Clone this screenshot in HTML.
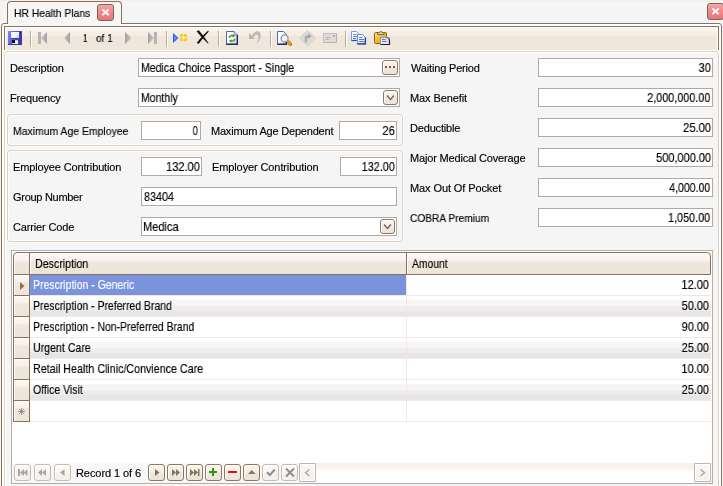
<!DOCTYPE html>
<html><head><meta charset="utf-8"><title>HR Health Plans</title>
<style>
*{box-sizing:border-box;margin:0;padding:0}
html,body{width:723px;height:486px;overflow:hidden;background:#f5f5f5}
body{position:relative;font-family:"Liberation Sans",sans-serif;font-size:11px;color:#000}
.a{position:absolute}
.t{position:absolute;white-space:nowrap;line-height:13px;height:13px;font-size:11px;will-change:transform;-webkit-text-stroke:0.15px currentColor}
.t.m{font-size:12.4px;line-height:14px;height:14px}
.in{position:absolute;background:#fff;border:1px solid #b5a8a2;height:19px}
.in .t{top:3px}
.gb{position:absolute;border:1px solid #e0cfbc;border-radius:3px;background:#f5f5f5;box-shadow:inset 0 0 0 1px #fdfdfd,0 0 0 1px #fafafa}
.btn{position:absolute;border:1px solid #8f7765;border-radius:3px;background:linear-gradient(#f8f3ec 0,#f5efe7 6px,#efe7dc 7px,#ede4d8 100%);box-shadow:inset 1px 1px 0 #fff}
.nb{position:absolute;width:17px;height:17px;top:464px;border:1px solid #8f7765;border-radius:3px;background:linear-gradient(#f8f3ec 0,#f5efe7 7px,#efe7dc 8px,#ede4d8 100%);box-shadow:inset 1px 1px 0 #fff}
.nb.d{border-color:#c7bbb0;background:linear-gradient(#fbfaf8 0,#f9f7f4 7px,#f5f2ee 8px,#f4f0eb 100%)}
.nb svg{position:absolute;left:0;top:0}
.sep{position:absolute;top:31px;width:2px;height:16px;border-left:1px solid #b8ab9d;border-right:1px solid #fff}
</style></head>
<body>
<div class="a" style="left:0;top:0;width:723px;height:1px;background:#f7efe6"></div>
<div class="a" style="left:0;top:0;width:1px;height:486px;background:#faf3ea"></div>
<div class="a" style="left:7px;top:1px;width:115px;height:24px;border:1px solid #8a705e;border-bottom:none;border-radius:4px 4px 0 0;background:#f6f6f6"></div>
<div class="a" style="left:1px;top:23px;width:721px;height:480px;border:1px solid #8a705e;border-radius:3px;background:#fff"></div>
<div class="a" style="left:8px;top:23px;width:113px;height:3px;background:#f6f6f6"></div>
<div class="t t" style="left:14.40px;transform-origin:0 0;top:7px;transform:scaleX(0.9378)">HR Health Plans</div>
<div class="a" style="left:97px;top:4px;width:17px;height:17px;border:1px solid #7d6555;border-radius:3px;background:linear-gradient(#f6a6a6,#f08a8c 45%,#ec7478)"><svg class="a" style="left:0;top:0" width="15" height="15" viewBox="0 0 15 15"><path d="M4.300 4.500l6.400 5.600m0-5.600l-6.400 5.600" stroke="#fff" stroke-width="1.900" fill="none"/></svg></div>
<div class="a" style="left:707px;top:3px;width:17px;height:17px;border:1px solid #7d6555;border-radius:3px;background:linear-gradient(#f6a6a6,#f08a8c 45%,#ec7478)"><svg class="a" style="left:0;top:0" width="15" height="15" viewBox="0 0 15 15"><path d="M4.300 4.500l6.400 5.600m0-5.600l-6.400 5.600" stroke="#fff" stroke-width="1.900" fill="none"/></svg></div>
<div class="a" style="left:4px;top:26px;width:715px;height:24px;border:1px solid #8a705e;border-bottom:none;background:#fff"></div>
<div class="a" style="left:6px;top:28px;width:711px;height:22px;background:linear-gradient(#f8f5f1 0,#f8f5f1 3px,#f6ede4 3px,#f6ede4 8px,#efe7db 8px)"></div>
<div class="a" style="left:4px;top:51px;width:715px;height:445px;border:1px solid #dccebd;border-radius:3px;background:#f5f5f5;box-shadow:inset 1px 1px 0 #fff"></div>
<svg class="a" style="left:8px;top:31px" width="14" height="14" viewBox="0 0 14 14"><defs><linearGradient id="fl" x1="0" x2="1" y1="0" y2="0.300"><stop offset="0" stop-color="#8688f0"/><stop offset="0.500" stop-color="#5a5cd0"/><stop offset="1" stop-color="#3a3aa8"/></linearGradient></defs><path d="M0 0h14v14h-13l-1-1z" fill="url(#fl)"/><rect x="0" y="13" width="14" height="1" fill="#3a3aa0"/><rect x="3" y="1" width="8" height="6" fill="#f2f4fc"/><path d="M11 3v4h-4z" fill="#d4d8f4"/><rect x="3" y="7" width="8" height="1" fill="#3c3cb0"/><rect x="4" y="9" width="6" height="4" fill="#c8cce8"/><rect x="4" y="9" width="3" height="3" fill="#0c0c18"/><rect x="7" y="10" width="3" height="3" fill="#eef0fa"/><rect x="12" y="1" width="1" height="2" fill="#28287c"/></svg>
<div class="sep" style="left:30px"></div>
<div class="sep" style="left:166px"></div>
<div class="sep" style="left:218px"></div>
<div class="sep" style="left:270px"></div>
<div class="sep" style="left:345px"></div>
<svg width="0" height="0" class="a"><defs><linearGradient id="gg" x1="0" x2="1" y1="0" y2="0"><stop offset="0" stop-color="#c8c8c8"/><stop offset="1" stop-color="#a0a0a0"/></linearGradient><linearGradient id="gg2" x1="1" x2="0" y1="0" y2="0"><stop offset="0" stop-color="#c8c8c8"/><stop offset="1" stop-color="#a0a0a0"/></linearGradient><linearGradient id="doc" x1="0" x2="1" y1="0" y2="1"><stop offset="0.400" stop-color="#fff"/><stop offset="1" stop-color="#b8c8ec"/></linearGradient><linearGradient id="clip" x1="0" x2="1" y1="0" y2="1"><stop offset="0" stop-color="#fbe07a"/><stop offset="0.500" stop-color="#f0b820"/><stop offset="1" stop-color="#d89408"/></linearGradient></defs></svg>
<svg class="a" style="left:38px;top:32px" width="10" height="12"><rect x="0" y="0" width="3" height="12" fill="#b4b4b4"/><path d="M9 0v12l-6-6z" fill="url(#gg)"/></svg>
<svg class="a" style="left:64px;top:32px" width="7" height="12"><path d="M6 0v12l-6-6z" fill="url(#gg)"/></svg>
<div class="t t" style="left:82.90px;transform-origin:0 0;top:32px;transform:scaleX(0.7233)">1</div>
<div class="t t" style="left:96.10px;transform-origin:0 0;top:32px;transform:scaleX(0.9129)">of 1</div>
<svg class="a" style="left:125px;top:32px" width="7" height="12"><path d="M0 0v12l6.500-6z" fill="url(#gg2)"/></svg>
<svg class="a" style="left:148px;top:32px" width="10" height="12"><rect x="6" y="0" width="3" height="12" fill="#b4b4b4"/><path d="M0 0v12l6-6z" fill="url(#gg2)"/></svg>
<svg class="a" style="left:173px;top:33px" width="15" height="10"><path d="M0 0v10l5.500-5z" fill="#2463ee"/><path d="M1 2.500v5l3-2.500z" fill="#5a90ff"/><rect x="7" y="1" width="7" height="7" fill="#f5cd2a"/><path d="M10.500 1v7M7 4.500h7" stroke="#fae67a" stroke-width="1"/><path d="M7.500 1.500l6 6M13.500 1.500l-6 6" stroke="#f8dc58" stroke-width=".800"/><rect x="9.500" y="3.500" width="2" height="2" fill="#fef6c0"/><rect x="10" y="4" width="1" height="1" fill="#fff"/></svg>
<svg class="a" style="left:196px;top:30px" width="14" height="14"><path d="M0.600 1.200L2.800.300C6 4.200 9.500 8.800 12.600 13.200L11.900 13.600C8 9.500 4 5.500.600 1.200z" fill="#111"/><path d="M12 .800L12.900 1.500C9.500 5 6 9.500 2.800 13.800L.600 13C4 8.500 8 4.500 12 .800z" fill="#111"/></svg>
<svg class="a" style="left:226px;top:31px" width="12" height="14"><path d="M0.500.500h7.500l3.500 3.500v9.500h-11z" fill="url(#doc)" stroke="#4868b0"/><path d="M8 .500v3.500h3.500" fill="#dfe6f8" stroke="#4868b0" stroke-width=".800"/><path d="M11.300 4v9.300h-10.800" fill="none" stroke="#1c2c60" stroke-width="1.400"/><path d="M3.200 6.800a2.800 2.500 0 0 1 4.600-1.600M8.800 7.800a2.800 2.500 0 0 1-4.600 1.700" stroke="#4a9c1c" stroke-width="1.500" fill="none"/><path d="M6.600 3.200l2.600 2-3 1zM5.400 11.500l-2.600-2 3-1z" fill="#4a9c1c"/></svg>
<svg class="a" style="left:249px;top:31px" width="13" height="13"><path d="M0 2L0 8L6 8Z" fill="#b4b2ae"/><path d="M3 4.500C4.500 1.500 7 0 9 .300C11.500.800 12 4 11.500 6.500C11 9 9.500 11.500 7.500 12.700C9 10 9.600 7.500 9.300 5.500C9 3.800 7.500 3.300 6.500 4C5.800 4.500 5.200 5.500 4.800 6.500Z" fill="#bdbbb7"/></svg>
<svg class="a" style="left:277px;top:31px" width="16" height="15"><path d="M0.500.500h6l3 3v10h-9z" fill="url(#doc)" stroke="#4868b0"/><path d="M9.300 4v9.300h-8.800" fill="none" stroke="#1c2c60" stroke-width="1.400"/><circle cx="7.600" cy="7.400" r="3.500" fill="#e8f2ff" stroke="#8c94a4" stroke-width="1.300"/><circle cx="6.800" cy="6.600" r="1.300" fill="#fff"/><path d="M11.300 11l2 2.200" stroke="#b06a10" stroke-width="3.400" stroke-linecap="round"/><path d="M11.100 10.700l2 2.200" stroke="#f09a1c" stroke-width="2.400" stroke-linecap="round"/></svg>
<svg class="a" style="left:299px;top:30px" width="17" height="16"><path d="M8.500.400l7.800 7.600-7.800 7.600-7.800-7.600z" fill="#dddbd7" stroke="#cfccc7"/><path d="M5.800 12.500v-4.500q0-2.800 3.200-2.800v-1.900l3.600 3-3.600 3v-1.900q-1.200 0-1.200 1.200v3.900z" fill="#aaa8a4"/></svg>
<svg class="a" style="left:323px;top:33px" width="14" height="10"><rect x="0.500" y="0.500" width="13" height="9" fill="#dedcd9" stroke="#c3c1bd"/><path d="M.500 9.500h13v-9" fill="none" stroke="#b5b3af"/><rect x="10" y="2" width="2" height="2" fill="#aaa8a4"/><path d="M2.500 4.500h5M2.500 6.500h4" stroke="#b8b6b2"/></svg>
<svg class="a" style="left:351px;top:31px" width="16" height="14"><path d="M0.500.500h5l2.500 2.500v6.500h-7.500z" fill="url(#doc)" stroke="#7c98dc"/><path d="M.500 9.500h5" stroke="#2c4cac" stroke-width="1.200"/><path d="M2 3.500h3.500M2 5.500h4M2 7.500h3" stroke="#5a88e8"/><path d="M6.500 3.500h5l3 3v6.500h-8z" fill="url(#doc)" stroke="#6c8cd8"/><path d="M14.400 6.500v6.400h-8" fill="none" stroke="#1c3c9c" stroke-width="1.300"/><path d="M8 6.500h3.500M8 8.500h5M8 10.500h5" stroke="#4a78e0"/></svg>
<svg class="a" style="left:374px;top:31px" width="17" height="14"><rect x="0.500" y="1.500" width="12" height="11" rx="1" fill="url(#clip)" stroke="#8a6810"/><path d="M3.500 3.500v-2h2l.500-1h1.500l.500 1h2v2z" fill="#d8d0b8" stroke="#6a5a30" stroke-width=".800"/><rect x="6.500" y="6.500" width="9" height="7" fill="#dde4f0" stroke="#8a9cc0"/><path d="M15.500 8.500v5h-9" fill="none" stroke="#1c2030" stroke-width="1.200"/><path d="M8 8.500h3.500M8 10.500h4.500" stroke="#6a7ca8"/><path d="M13 6.500l2.500 2.500" stroke="#384058"/></svg>
<div class="gb" style="left:7px;top:114px;width:396px;height:32px"></div>
<div class="gb" style="left:7px;top:150px;width:396px;height:92px"></div>
<div class="t" style="left:10.40px;top:62px;letter-spacing:-0.117px">Description</div>
<div class="in" style="left:138px;top:58px;width:262px"></div>
<div class="t m" style="left:141.05px;transform-origin:0 0;top:61px;transform:scaleX(0.8521)">Medica Choice Passport - Single</div>
<div class="btn" style="left:382px;top:60px;width:16px;height:15px"><svg class="a" style="left:0;top:0" width="14" height="13"><rect x="2" y="5" width="2" height="2" fill="#7a5e4c"/><rect x="6" y="5" width="2" height="2" fill="#7a5e4c"/><rect x="10" y="5" width="2" height="2" fill="#7a5e4c"/></svg></div>
<div class="t" style="left:10.40px;top:92px;letter-spacing:-0.156px">Frequency</div>
<div class="in" style="left:138px;top:88px;width:262px"></div>
<div class="t m" style="left:141.05px;transform-origin:0 0;top:91px;transform:scaleX(0.8474)">Monthly</div>
<div class="btn" style="left:383px;top:90px;width:15px;height:15px"><svg class="a" style="left:0;top:0" width="13" height="13"><path d="M3 4.500l3.500 4 3.500-4" stroke="#7a6252" stroke-width="1.300" fill="none"/></svg></div>
<div class="t t" style="left:12.90px;transform-origin:0 0;top:125px;transform:scaleX(0.9483)">Maximum Age Employee</div>
<div class="in" style="left:141px;top:121px;width:60px"></div>
<div class="t m" style="right:524.98px;transform-origin:100% 0;top:124px;transform:scaleX(0.7571)">0</div>
<div class="t" style="left:210.90px;top:125px;letter-spacing:-0.205px">Maximum Age Dependent</div>
<div class="in" style="left:339px;top:121px;width:58px"></div>
<div class="t m" style="right:328.20px;transform-origin:100% 0;top:124px;transform:scaleX(0.9019)">26</div>
<div class="t" style="left:12.90px;top:161px;letter-spacing:-0.143px">Employee Contribution</div>
<div class="in" style="left:141px;top:157px;width:61px"></div>
<div class="t m" style="right:523.20px;transform-origin:100% 0;top:160px;transform:scaleX(0.8943)">132.00</div>
<div class="t" style="left:211.80px;top:161px;letter-spacing:-0.110px">Employer Contribution</div>
<div class="in" style="left:340px;top:157px;width:57px"></div>
<div class="t m" style="right:328.20px;transform-origin:100% 0;top:160px;transform:scaleX(0.8772)">132.00</div>
<div class="t" style="left:12.90px;top:191px;letter-spacing:-0.286px">Group Number</div>
<div class="in" style="left:141px;top:187px;width:256px"></div>
<div class="t m" style="left:144.30px;transform-origin:0 0;top:190px;transform:scaleX(0.8679)">83404</div>
<div class="t" style="left:12.90px;top:221px;letter-spacing:-0.148px">Carrier Code</div>
<div class="in" style="left:141px;top:217px;width:256px"></div>
<div class="t m" style="left:143.41px;transform-origin:0 0;top:220px;transform:scaleX(0.8937)">Medica</div>
<div class="btn" style="left:380px;top:219px;width:15px;height:15px"><svg class="a" style="left:0;top:0" width="13" height="13"><path d="M3 4.500l3.500 4 3.500-4" stroke="#7a6252" stroke-width="1.300" fill="none"/></svg></div>
<div class="t" style="left:410.80px;top:62px;letter-spacing:-0.170px">Waiting Period</div>
<div class="in" style="left:538px;top:58px;width:175px"></div>
<div class="t m" style="right:12.40px;transform-origin:100% 0;top:61px;transform:scaleX(0.8863)">30</div>
<div class="t" style="left:410.10px;top:92px;letter-spacing:-0.101px">Max Benefit</div>
<div class="in" style="left:538px;top:88px;width:175px"></div>
<div class="t m" style="right:13.10px;transform-origin:100% 0;top:91px;transform:scaleX(0.8725)">2,000,000.00</div>
<div class="t" style="left:410.10px;top:122px;letter-spacing:-0.182px">Deductible</div>
<div class="in" style="left:538px;top:118px;width:175px"></div>
<div class="t m" style="right:12.40px;transform-origin:100% 0;top:121px;transform:scaleX(0.9002)">25.00</div>
<div class="t" style="left:410.10px;top:152px;letter-spacing:-0.176px">Major Medical Coverage</div>
<div class="in" style="left:538px;top:148px;width:175px"></div>
<div class="t m" style="right:12.40px;transform-origin:100% 0;top:151px;transform:scaleX(0.8849)">500,000.00</div>
<div class="t" style="left:410.10px;top:182px;letter-spacing:-0.103px">Max Out Of Pocket</div>
<div class="in" style="left:538px;top:178px;width:175px"></div>
<div class="t m" style="right:13.09px;transform-origin:100% 0;top:181px;transform:scaleX(0.8502)">4,000.00</div>
<div class="t t" style="left:410.10px;transform-origin:0 0;top:212px;transform:scaleX(0.9247)">COBRA Premium</div>
<div class="in" style="left:538px;top:208px;width:175px"></div>
<div class="t m" style="right:13.10px;transform-origin:100% 0;top:211px;transform:scaleX(0.8760)">1,050.00</div>
<div class="a" style="left:11px;top:250px;width:702px;height:234px;border:1px solid #b9ada3;background:#fff"></div>
<div class="a" style="left:13px;top:252px;width:698px;height:23px;border:1px solid #8a705e;border-radius:4px 4px 0 0;background:linear-gradient(#fbf8f4 0,#f6f0e9 8px,#efe7dc 9px,#ede4d8 100%);box-shadow:inset 1px 1px 0 #fff"></div>
<div class="a" style="left:29px;top:253px;width:1px;height:21px;background:#8a705e"></div><div class="a" style="left:30px;top:253px;width:1px;height:21px;background:#fff"></div>
<div class="a" style="left:406px;top:253px;width:1px;height:21px;background:#8a705e"></div><div class="a" style="left:407px;top:253px;width:1px;height:21px;background:#fff"></div>
<div class="t m" style="left:34.94px;transform-origin:0 0;top:257px;transform:scaleX(0.8594)">Description</div>
<div class="t m" style="left:411.90px;transform-origin:0 0;top:257px;transform:scaleX(0.8345)">Amount</div>
<div class="a" style="left:13px;top:274px;width:17px;height:22px;border:1px solid #8a705e;background:linear-gradient(#fbf8f3 0,#f6f0e8 7px,#efe7dc 8px,#eee5d9 100%);box-shadow:inset 1px 1px 0 #fff"></div>
<div class="a" style="left:30px;top:275px;width:681px;height:20px;background:#fff"></div>
<div class="a" style="left:30px;top:275px;width:376px;height:20px;background:#7a93dc"></div>
<div class="a" style="left:30px;top:295px;width:681px;height:1px;background:#f1e9df"></div>
<div class="a" style="left:406px;top:275px;width:1px;height:21px;background:#f1e9df"></div>
<div class="t m" style="left:33.05px;transform-origin:0 0;top:278px;transform:scaleX(0.8455);color:#fff">Prescription - Generic</div>
<div class="t m" style="right:14.20px;transform-origin:100% 0;top:278px;transform:scaleX(0.8913)">12.00</div>
<div class="a" style="left:13px;top:295px;width:17px;height:22px;border:1px solid #8a705e;background:linear-gradient(#fbf8f3 0,#f6f0e8 7px,#efe7dc 8px,#eee5d9 100%);box-shadow:inset 1px 1px 0 #fff"></div>
<div class="a" style="left:30px;top:296px;width:681px;height:20px;background:linear-gradient(#fff 0,#fff 4px,#f6f6f6 4px,#f6f6f6 10px,#eeecec 10px,#eeecec 15px,#e7e5e5 15px)"></div>
<div class="a" style="left:30px;top:316px;width:681px;height:1px;background:#f1e9df"></div>
<div class="a" style="left:406px;top:296px;width:1px;height:21px;background:#f1e9df"></div>
<div class="t m" style="left:33.06px;transform-origin:0 0;top:299px;transform:scaleX(0.8437)">Prescription - Preferred Brand</div>
<div class="t m" style="right:14.20px;transform-origin:100% 0;top:299px;transform:scaleX(0.8822)">50.00</div>
<div class="a" style="left:13px;top:316px;width:17px;height:22px;border:1px solid #8a705e;background:linear-gradient(#fbf8f3 0,#f6f0e8 7px,#efe7dc 8px,#eee5d9 100%);box-shadow:inset 1px 1px 0 #fff"></div>
<div class="a" style="left:30px;top:317px;width:681px;height:20px;background:#fff"></div>
<div class="a" style="left:30px;top:337px;width:681px;height:1px;background:#f1e9df"></div>
<div class="a" style="left:406px;top:317px;width:1px;height:21px;background:#f1e9df"></div>
<div class="t m" style="left:33.06px;transform-origin:0 0;top:320px;transform:scaleX(0.8423)">Prescription - Non-Preferred Brand</div>
<div class="t m" style="right:14.20px;transform-origin:100% 0;top:320px;transform:scaleX(0.8822)">90.00</div>
<div class="a" style="left:13px;top:337px;width:17px;height:22px;border:1px solid #8a705e;background:linear-gradient(#fbf8f3 0,#f6f0e8 7px,#efe7dc 8px,#eee5d9 100%);box-shadow:inset 1px 1px 0 #fff"></div>
<div class="a" style="left:30px;top:338px;width:681px;height:20px;background:linear-gradient(#fff 0,#fff 4px,#f6f6f6 4px,#f6f6f6 10px,#eeecec 10px,#eeecec 15px,#e7e5e5 15px)"></div>
<div class="a" style="left:30px;top:358px;width:681px;height:1px;background:#f1e9df"></div>
<div class="a" style="left:406px;top:338px;width:1px;height:21px;background:#f1e9df"></div>
<div class="t m" style="left:33.20px;transform-origin:0 0;top:341px;transform:scaleX(0.8557)">Urgent Care</div>
<div class="t m" style="right:14.20px;transform-origin:100% 0;top:341px;transform:scaleX(0.8822)">25.00</div>
<div class="a" style="left:13px;top:358px;width:17px;height:22px;border:1px solid #8a705e;background:linear-gradient(#fbf8f3 0,#f6f0e8 7px,#efe7dc 8px,#eee5d9 100%);box-shadow:inset 1px 1px 0 #fff"></div>
<div class="a" style="left:30px;top:359px;width:681px;height:20px;background:#fff"></div>
<div class="a" style="left:30px;top:379px;width:681px;height:1px;background:#f1e9df"></div>
<div class="a" style="left:406px;top:359px;width:1px;height:21px;background:#f1e9df"></div>
<div class="t m" style="left:33.04px;transform-origin:0 0;top:362px;transform:scaleX(0.8640)">Retail Health Clinic/Convience Care</div>
<div class="t m" style="right:14.20px;transform-origin:100% 0;top:362px;transform:scaleX(0.8913)">10.00</div>
<div class="a" style="left:13px;top:379px;width:17px;height:22px;border:1px solid #8a705e;background:linear-gradient(#fbf8f3 0,#f6f0e8 7px,#efe7dc 8px,#eee5d9 100%);box-shadow:inset 1px 1px 0 #fff"></div>
<div class="a" style="left:30px;top:380px;width:681px;height:20px;background:linear-gradient(#fff 0,#fff 4px,#f6f6f6 4px,#f6f6f6 10px,#eeecec 10px,#eeecec 15px,#e7e5e5 15px)"></div>
<div class="a" style="left:30px;top:400px;width:681px;height:1px;background:#f1e9df"></div>
<div class="a" style="left:406px;top:380px;width:1px;height:21px;background:#f1e9df"></div>
<div class="t m" style="left:33.20px;transform-origin:0 0;top:383px;transform:scaleX(0.8483)">Office Visit</div>
<div class="t m" style="right:14.20px;transform-origin:100% 0;top:383px;transform:scaleX(0.8822)">25.00</div>
<div class="a" style="left:13px;top:400px;width:17px;height:22px;border:1px solid #8a705e;background:linear-gradient(#fbf8f3 0,#f6f0e8 7px,#efe7dc 8px,#eee5d9 100%);box-shadow:inset 1px 1px 0 #fff"></div>
<div class="a" style="left:30px;top:401px;width:681px;height:20px;background:#fff"></div>
<div class="a" style="left:30px;top:421px;width:681px;height:1px;background:#f1e9df"></div>
<div class="a" style="left:406px;top:401px;width:1px;height:21px;background:#f1e9df"></div>
<svg class="a" style="left:20px;top:282px" width="5" height="8"><path d="M0 0v8l4.500-4z" fill="#8a705e"/></svg>
<svg class="a" style="left:18px;top:408px" width="7" height="7"><path d="M3.500 0v7M0 3.500h7M1 1l5 5M6 1l-5 5" stroke="#8a705e" stroke-width=".700" fill="none"/></svg>
<div class="a" style="left:12px;top:463px;width:700px;height:20px;background:#f8f8f8"></div>
<div class="nb d" style="left:14px"><svg width="15" height="15" viewBox="0 0 15 15"><rect x="3" y="4" width="2" height="7" fill="#a9a7a5"/><path d="M9 4v7l-4-3.500zM12.500 4v7l-4-3.500z" fill="#a9a7a5"/></svg></div>
<div class="nb d" style="left:34px"><svg width="15" height="15" viewBox="0 0 15 15"><path d="M7 4v7l-4-3.500zM11 4v7l-4-3.500z" fill="#a9a7a5"/></svg></div>
<div class="nb d" style="left:54px"><svg width="15" height="15" viewBox="0 0 15 15"><path d="M9.500 4v7l-4.500-3.500z" fill="#a9a7a5"/></svg></div>
<div class="t" style="left:76.10px;top:467px;letter-spacing:-0.075px">Record 1 of 6</div>
<div class="nb" style="left:148px"><svg width="15" height="15" viewBox="0 0 15 15"><path d="M6 4v7l4.500-3.500z" fill="#8a705e"/></svg></div>
<div class="nb" style="left:167px"><svg width="15" height="15" viewBox="0 0 15 15"><path d="M4 4v7l4-3.500zM8 4v7l4-3.500z" fill="#8a705e"/></svg></div>
<div class="nb" style="left:186px"><svg width="15" height="15" viewBox="0 0 15 15"><path d="M3 4v7l4-3.500zM7 4v7l4-3.500z" fill="#8a705e"/><rect x="11" y="4" width="1.500" height="7" fill="#8a705e"/></svg></div>
<div class="nb" style="left:205px"><svg width="15" height="15" viewBox="0 0 15 15"><rect x="3" y="6" width="8" height="2" fill="#2a9a0a"/><rect x="6" y="3" width="2" height="8" fill="#2a9a0a"/></svg></div>
<div class="nb" style="left:224px"><svg width="15" height="15" viewBox="0 0 15 15"><rect x="3" y="6" width="9" height="2" fill="#d8101c"/></svg></div>
<div class="nb" style="left:243px"><svg width="15" height="15" viewBox="0 0 15 15"><path d="M4 9L7.750 5L11.500 9z" fill="#8a705e"/></svg></div>
<div class="nb d" style="left:262px"><svg width="15" height="15" viewBox="0 0 15 15"><path d="M4 7.200l2.800 2.800 5-5.500" stroke="#8e8e8e" stroke-width="2" fill="none"/></svg></div>
<div class="nb d" style="left:281px"><svg width="15" height="15" viewBox="0 0 15 15"><path d="M4 3.500l8 8m0-8l-8 8" stroke="#8e8e8e" stroke-width="2" fill="none"/></svg></div>
<div class="a" style="left:316px;top:463px;width:378px;height:20px;background:linear-gradient(#f7f2ec 0,#f7f2ec 6px,#fbf9f6 6px,#fbf9f6 8px,#fff 8px)"></div>
<div class="a" style="left:299px;top:463px;width:17px;height:19px;border:1px solid #c0b4ac;border-radius:1px;background:linear-gradient(#f6f6f6 0,#f6f6f6 7px,#f6f2ed 7px);box-shadow:inset 0 0 0 1px #fff"><svg class="a" style="left:0;top:0" width="15" height="17"><path d="M9.500 5.500l-4 3.200 4 3.200" stroke="#b0a09a" stroke-width="1.300" fill="none"/></svg></div>
<div class="a" style="left:694px;top:463px;width:17px;height:19px;border:1px solid #c0b4ac;border-radius:1px;background:linear-gradient(#f6f6f6 0,#f6f6f6 7px,#f6f2ed 7px);box-shadow:inset 0 0 0 1px #fff"><svg class="a" style="left:0;top:0" width="15" height="17"><path d="M5.500 5.500l4 3.200-4 3.200" stroke="#b0a09a" stroke-width="1.300" fill="none"/></svg></div>
</body></html>
